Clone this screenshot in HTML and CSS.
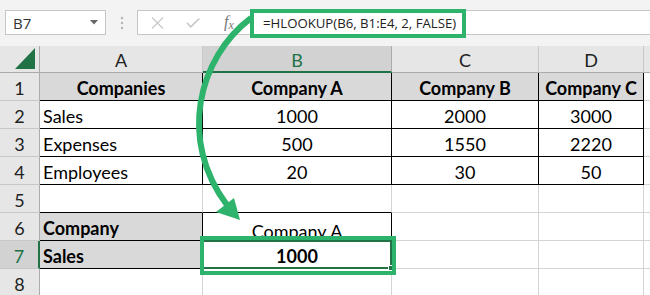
FILE: index.html
```html
<!DOCTYPE html>
<html>
<head>
<meta charset="utf-8">
<link rel="stylesheet" href="styles.css">
</head>
<body>
<div class="app">
  <div class="toolbar">
    <div class="namebox">
      <span class="nb-text">B7</span>
      <svg class="caret" width="8" height="5" viewBox="0 0 8 5"><path d="M0 0H8L4 4.5Z" fill="#666"/></svg>
    </div>
    <div class="dots">
      <svg width="4" height="14" viewBox="0 0 4 14"><circle cx="2" cy="2" r="1.2" fill="#b5b5b5"/><circle cx="2" cy="7" r="1.2" fill="#b5b5b5"/><circle cx="2" cy="12" r="1.2" fill="#b5b5b5"/></svg>
    </div>
    <div class="fxbtns">
      <svg class="ico-x" width="13" height="12" viewBox="0 0 13 12"><path d="M1 0.5L12 11.5M12 0.5L1 11.5" stroke="#c8c8c8" stroke-width="1.2" fill="none"/></svg>
      <svg class="ico-check" width="14" height="10" viewBox="0 0 14 10"><path d="M0.8 4.8L4.8 8.8L13.2 0.6" stroke="#c8c8c8" stroke-width="1.6" fill="none"/></svg>
      <span class="fx">f<sub>x</sub></span>
    </div>
    <div class="formula">
      <span class="ftext">=HLOOKUP(B6, B1:E4, 2, FALSE)</span>
      <div class="fbox"></div>
    </div>
  </div>

  <div class="sheet">
    <div class="corner"><svg width="20" height="21" viewBox="0 0 20 21"><path d="M20 0V21H0Z" fill="#217346"/></svg></div>
    <div class="ch">A</div>
    <div class="ch sel">B</div>
    <div class="ch">C</div>
    <div class="ch">D</div>
    <div class="ch last"></div>

    <div class="rh">1</div>
    <div class="c hd tb m">Companies</div>
    <div class="c hd tb m">Company A</div>
    <div class="c hd tb m">Company B</div>
    <div class="c hd tb m">Company C</div>
    <div class="c"></div>

    <div class="rh">2</div>
    <div class="c tb">Sales</div>
    <div class="c tb m">1000</div>
    <div class="c tb m">2000</div>
    <div class="c tb m">3000</div>
    <div class="c"></div>

    <div class="rh">3</div>
    <div class="c tb">Expenses</div>
    <div class="c tb m">500</div>
    <div class="c tb m">1550</div>
    <div class="c tb m">2220</div>
    <div class="c"></div>

    <div class="rh">4</div>
    <div class="c tb">Employees</div>
    <div class="c tb m">20</div>
    <div class="c tb m">30</div>
    <div class="c tb m">50</div>
    <div class="c"></div>

    <div class="rh">5</div>
    <div class="c bb"></div>
    <div class="c bb"></div>
    <div class="c"></div>
    <div class="c"></div>
    <div class="c"></div>

    <div class="rh">6</div>
    <div class="c hd tb">Company</div>
    <div class="c tb m low">Company A</div>
    <div class="c"></div>
    <div class="c"></div>
    <div class="c"></div>

    <div class="rh sel">7</div>
    <div class="c hd tb">Sales</div>
    <div class="c tb m bold active">1000<div class="selbox"><i class="handle"></i></div><div class="annot"></div></div>
    <div class="c"></div>
    <div class="c"></div>
    <div class="c"></div>

    <div class="rh">8</div>
    <div class="c"></div>
    <div class="c"></div>
    <div class="c"></div>
    <div class="c"></div>
    <div class="c"></div>
  </div>

  <svg class="arrow" width="650" height="295" viewBox="0 0 650 295">
    <path d="M251 18 C198 58 178 140 227 205" stroke="#2db36b" stroke-width="6" fill="none" stroke-linecap="butt"/>
    <path d="M216 212 L234 198 L240 220 Z" fill="#2db36b"/>
  </svg>
</div>
</body>
</html>
```

FILE: styles.css
```css
* { box-sizing: border-box; }
html, body { margin: 0; padding: 0; }
body {
  width: 650px;
  height: 295px;
  overflow: hidden;
  background: #fff;
  font-family: "Lato", "Open Sans", sans-serif;
  color: #000;
}
.app { position: relative; width: 650px; height: 295px; overflow: hidden; }

.toolbar {
  height: 46px;
  background: #f3f3f3;
  display: flex;
  align-items: flex-start;
  padding-top: 10px;
}
.namebox {
  margin-left: 5px;
  width: 101px;
  height: 25px;
  background: #fff;
  border: 1px solid #c6c6c6;
  display: flex;
  align-items: center;
  padding: 0 7px 0 7px;
  justify-content: space-between;
}
.nb-text { font-family: "Open Sans", sans-serif; font-size: 15px; color: #333; }
.dots { width: 31px; height: 25px; display: flex; align-items: center; justify-content: center; }
.fxbtns {
  width: 110px;
  height: 25px;
  background: #fff;
  border: 1px solid #c6c6c6;
  border-right: none;
  display: flex;
  align-items: center;
  padding-left: 13px;
}
.ico-x { margin-right: 22px; }
.ico-check { margin-right: 24px; }
.fx {
  font-family: "Liberation Serif", serif;
  font-style: italic;
  font-size: 16px;
  color: #777;
  line-height: 1;
}
.fx sub { font-size: 12px; vertical-align: -2px; }
.formula {
  position: relative;
  flex: 1;
  height: 25px;
  background: #fff;
  border-top: 1px solid #c6c6c6;
  border-bottom: 1px solid #c6c6c6;
  display: flex;
  align-items: center;
  padding-left: 16px;
}
.ftext { font-family: "Open Sans", sans-serif; font-size: 13.2px; color: #222; }
.fbox {
  position: absolute;
  left: 3px;
  top: -2px;
  width: 216px;
  height: 29px;
  border: 4px solid #2db36b;
}

.sheet {
  display: grid;
  grid-template-columns: 40px 163px 189px 147px 105px 1fr;
  grid-template-rows: 27px repeat(8, 28px);
}
.corner {
  background: #e6e6e6;
  border-right: 1px solid #ababab;
  border-bottom: 1px solid #ababab;
  display: flex;
  align-items: flex-end;
  justify-content: flex-end;
  padding: 0 4px 3px 0;
}
.ch {
  background: #e6e6e6;
  border-right: 1px solid #c8c8c8;
  border-bottom: 1px solid #ababab;
  font-size: 18px;
  display: flex;
  align-items: center;
  justify-content: center;
  padding-top: 2px;
  color: #222;
}
.ch.sel {
  background: #d2d2d2;
  color: #217346;
  border-bottom: 2px solid #217346;
  border-right-color: #ababab;
}
.ch.last { border-right: none; }
.rh {
  background: #e6e6e6;
  border-right: 1px solid #ababab;
  border-bottom: 1px solid #c8c8c8;
  font-size: 18px;
  color: #222;
  display: flex;
  align-items: center;
  justify-content: center;
  padding-top: 2px;
}
.rh.sel {
  background: #d2d2d2;
  color: #217346;
  border-right: 2px solid #217346;
}
.c {
  border-right: 1px solid #d4d4d4;
  border-bottom: 1px solid #d4d4d4;
  font-size: 18px;
  display: flex;
  align-items: center;
  padding: 2px 3px 0 3px;
  white-space: nowrap;
}
.c.m { justify-content: center; }
.c.low { align-items: flex-end; padding-bottom: 0; line-height: 1; }
.c.tb { border-right-color: #000; border-bottom-color: #000; }
.c.bb { border-bottom-color: #000; }
.c.hd { background: #d9d9d9; font-weight: 700; }
.c.bold { font-weight: 700; }
.c.active { position: relative; }
.selbox {
  position: absolute;
  left: -2px;
  top: -1px;
  right: -1px;
  bottom: -1px;
  border: 2px solid #217346;
}
.handle {
  position: absolute;
  right: -4px;
  bottom: -4px;
  width: 6px;
  height: 6px;
  background: #217346;
  border: 1px solid #fff;
}
.annot {
  position: absolute;
  left: -3px;
  top: -5px;
  right: -5px;
  bottom: -7px;
  border: 4px solid #2db36b;
}
.arrow { position: absolute; left: 0; top: 0; pointer-events: none; }
```
